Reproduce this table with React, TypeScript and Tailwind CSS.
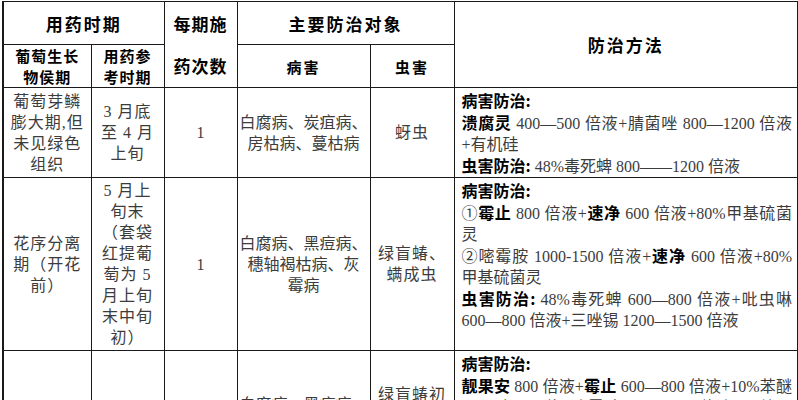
const serif = "font-['Liberation_Serif','Noto_Sans_CJK_SC',serif]";
const head = "font-['Noto_Sans_CJK_SC',sans-serif] font-bold text-black";

const cell = "border border-[#1a1a1a] text-center align-middle p-0";

function Lines({ lines }: { lines: string[] }) {
  return (
    <>
      {lines.map((l, i) => (
        <div key={i}>{l}</div>
      ))}
    </>
  );
}

// one line of the 防治方法 column; bold parts are product names / labels
type Part = { t: string; b?: boolean };
function MethodLine({ parts, full }: { parts: Part[]; full?: boolean }) {
  return (
    <div className={full ? "[text-align-last:justify]" : ""}>
      {parts.map((p, i) =>
        p.b ? (
          <span key={i} className={head}>
            {p.t}
          </span>
        ) : (
          <span key={i}>{p.t}</span>
        )
      )}
    </div>
  );
}

const rows = [
  {
    stage: ["葡萄芽鳞", "膨大期,但", "未见绿色", "组织"],
    time: ["3 月底", "至 4 月", "上旬"],
    times: "1",
    disease: ["白腐病、炭疽病、", "房枯病、蔓枯病"],
    pest: ["蚜虫"],
    h: "h-[86px]",
    method: [
      { parts: [{ t: "病害防治:", b: true }] },
      {
        parts: [{ t: "溃腐灵", b: true }, { t: " 400—500 倍液+腈菌唑 800—1200 倍液" }],
        full: true,
      },
      { parts: [{ t: "+有机硅" }] },
      { parts: [{ t: "虫害防治:", b: true }, { t: "  48%毒死蜱 800——1200 倍液" }] },
    ],
  },
  {
    stage: ["花序分离", "期（开花", "前）"],
    time: ["5 月上", "旬末", "（套袋", "红提葡", "萄为 5", "月上旬", "末中旬", "初）"],
    times: "1",
    disease: ["白腐病、黑痘病、", "穗轴褐枯病、灰", "霉病"],
    pest: ["绿盲蝽、", "螨成虫"],
    h: "h-[173px]",
    method: [
      { parts: [{ t: "病害防治:", b: true }] },
      {
        parts: [
          { t: "①" },
          { t: "霉止", b: true },
          { t: " 800 倍液+" },
          { t: "速净", b: true },
          { t: " 600 倍液+80%甲基硫菌" },
        ],
        full: true,
      },
      { parts: [{ t: "灵" }] },
      {
        parts: [
          { t: "②嘧霉胺 1000-1500 倍液+" },
          { t: "速净", b: true },
          { t: " 600 倍液+80%" },
        ],
        full: true,
      },
      { parts: [{ t: "甲基硫菌灵" }] },
      {
        parts: [{ t: "虫害防治:", b: true }, { t: "  48%毒死蜱 600—800 倍液+吡虫啉" }],
        full: true,
      },
      { parts: [{ t: "600—800 倍液+三唑锡 1200—1500 倍液" }] },
    ],
  },
  {
    stage: ["开花后", "幼果期"],
    time: ["5 月中", "下旬"],
    times: "1",
    disease: ["白腐病、黑痘病、", "穗轴褐枯病、灰", "霉病"],
    pest: ["绿盲蝽初", "孵若虫、", "螨类、", "蓟马"],
    h: "h-[150px]",
    method: [
      { parts: [{ t: "病害防治:", b: true }] },
      {
        parts: [
          { t: "靓果安", b: true },
          { t: " 800 倍液+" },
          { t: "霉止", b: true },
          { t: " 600—800 倍液+10%苯醚" },
        ],
        full: true,
      },
      { parts: [{ t: "甲环唑 800 倍+嘧霉胺 1000-1500 倍液+灭幼脲" }], full: true },
      { parts: [{ t: "虫害防治:", b: true }, { t: "  48%毒死蜱 800 倍液" }] },
    ],
  },
];

export default function App() {
  return (
    <div className="w-[798px] bg-white">
      <table
        className={`ml-[2px] mt-[1px] w-[795px] table-fixed border-collapse border-x-2 border-[#1a1a1a] ${serif} text-[16px] leading-[21px] text-[#3c3c3c]`}
      >
        <colgroup>
          <col className="w-[88px]" />
          <col className="w-[73px]" />
          <col className="w-[73px]" />
          <col className="w-[133px]" />
          <col className="w-[84px]" />
          <col className="w-[344px]" />
        </colgroup>
        <thead>
          <tr className="h-[43px]">
            <th colSpan={2} className={`${cell} ${head} text-[17px] tracking-[2px]`}>
              用药时期
            </th>
            <th rowSpan={2} className={`${cell} ${head} text-[17px] leading-[42px] tracking-[1px]`}>
              <div>每期施</div>
              <div>药次数</div>
            </th>
            <th colSpan={2} className={`${cell} ${head} text-[17px] tracking-[2px]`}>
              主要防治对象
            </th>
            <th rowSpan={2} className={`${cell} ${head} text-[17px] tracking-[2px]`}>
              防治方法
            </th>
          </tr>
          <tr className="h-[43px]">
            <th className={`${cell} ${head} text-[15px] tracking-[1px]`}>
              <div>葡萄生长</div>
              <div>物侯期</div>
            </th>
            <th className={`${cell} ${head} text-[15px] tracking-[1px]`}>
              <div>用药参</div>
              <div>考时期</div>
            </th>
            <th className={`${cell} ${head} text-[15px] tracking-[2px]`}>病害</th>
            <th className={`${cell} ${head} text-[15px] tracking-[2px]`}>虫害</th>
          </tr>
        </thead>
        <tbody>
          {rows.map((r, i) => (
            <tr key={i} className={r.h}>
              <td className={`${cell} tracking-[1px]`}>
                <Lines lines={r.stage} />
              </td>
              <td className={`${cell} tracking-[1px]`}>
                <Lines lines={r.time} />
              </td>
              <td className={cell}>{r.times}</td>
              <td className={cell}>
                <Lines lines={r.disease} />
              </td>
              <td className={`${cell} tracking-[1px]`}>
                <Lines lines={r.pest} />
              </td>
              <td className="border border-[#1a1a1a] px-[7px] pr-[5px] pt-[2px] text-left align-top">
                {r.method.map((m, j) => (
                  <MethodLine key={j} parts={m.parts} full={m.full} />
                ))}
              </td>
            </tr>
          ))}
        </tbody>
      </table>
    </div>
  );
}
